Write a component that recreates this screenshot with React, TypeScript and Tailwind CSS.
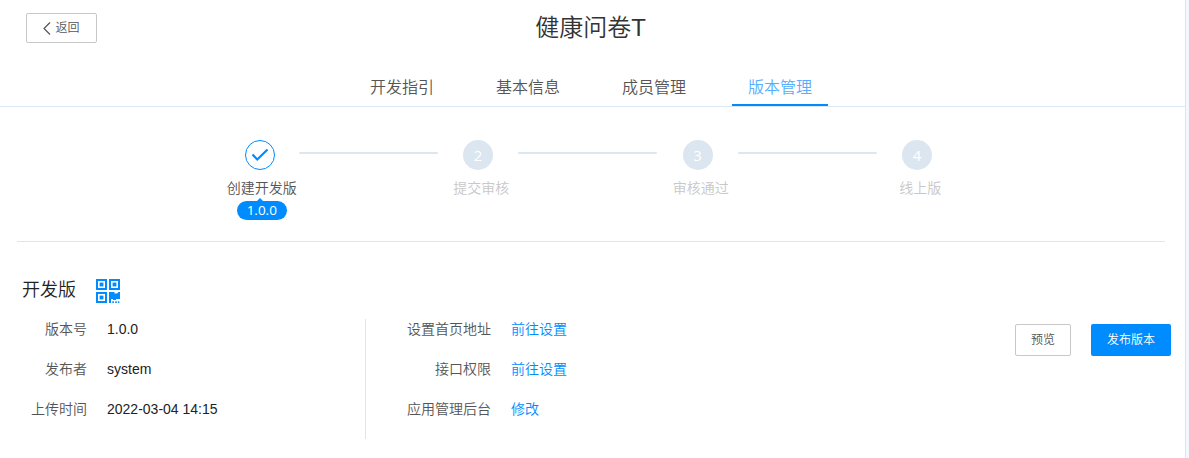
import clsx from "clsx";

const tabs = ["开发指引", "基本信息", "成员管理", "版本管理"];
const activeTab = "版本管理";

interface Step {
  label: string;
  done?: boolean;
  version?: string;
}

const steps: Step[] = [
  { label: "创建开发版", done: true, version: "1.0.0" },
  { label: "提交审核" },
  { label: "审核通过" },
  { label: "线上版" },
];

const info = [
  { label: "版本号", value: "1.0.0" },
  { label: "发布者", value: "system" },
  { label: "上传时间", value: "2022-03-04 14:15" },
];

const settings = [
  { label: "设置首页地址", action: "前往设置" },
  { label: "接口权限", action: "前往设置" },
  { label: "应用管理后台", action: "修改" },
];

function QrIcon() {
  return (
    <svg width="24" height="24" viewBox="0 0 24 24" fill="#008cff">
      {/* Three finder squares */}
      {[[0, 0], [13, 0], [0, 13]].map(([x, y]) => (
        <g key={`${x}-${y}`}>
          <rect x={x} y={y} width="11" height="11" />
          <rect x={x + 2} y={y + 2} width="7" height="7" fill="#fff" />
          <rect x={x + 3.6} y={y + 3.6} width="3.8" height="3.8" />
        </g>
      ))}
      <path d="M13 13h5.5v1.5h2.5l1.5-1.5h1.5v7h-4v1h-3v-1h-2v4h-2z" />
      <path d="M16.3 22.2h1.6v1.8h-1.6zM19.2 22.2h1.6v1.8h-1.6zM21.9 22.2h1.4v1.8h-1.4z" />
    </svg>
  );
}

function StepItem({ step, index }: { step: Step; index: number }) {
  return (
    <div className="w-[80px] pl-[6px] shrink-0 flex flex-col items-center">
      <div
        className={clsx(
          "w-[30px] h-[30px] rounded-full flex items-center justify-center text-[15px] leading-none font-['Open_Sans',sans-serif] font-normal",
          step.done ? "mr-[4.5px] border border-[#008cff]" : "mr-[6.5px] bg-[#dbe6f0] text-white"
        )}
      >
        {step.done ? (
          <svg width="18" height="14" viewBox="0 0 18 14" fill="none" stroke="#008cff" strokeWidth="2.2">
            <path d="M1.5 6.5L6.3 11.5L16.5 1.5" />
          </svg>
        ) : (
          <span>{index + 1}</span>
        )}
      </div>
      <span
        className={clsx(
          "mt-2 text-sm leading-5 whitespace-nowrap",
          step.done ? "text-[#555]" : "text-[#c8c8c8]"
        )}
      >
        {step.label}
      </span>
      {step.version && (
        <div className="relative mt-[3px] w-[50px] h-[19px] rounded-full bg-[#008cff] text-white text-[13.5px] leading-[19px] text-center font-['Open_Sans',sans-serif] font-normal">
          <span className="absolute -top-[3px] left-[20px] border-x-[3px] border-b-[3px] border-x-transparent border-b-[#008cff]" />
          {step.version}
        </div>
      )}
    </div>
  );
}

export default function App() {
  return (
    <div className="w-[1189px] h-[458px] overflow-hidden flex bg-[#f3f8fe] text-sm leading-5 text-[#222] font-['Liberation_Sans','Noto_Sans_CJK_SC',sans-serif] font-[350]">
      <div className="w-[1186px] shrink-0 bg-white border-r border-[#dbe6f3]">
        <header className="h-[107px] border-b border-[#dbe6f3] flex flex-col justify-between">
          <div className="grid grid-cols-[1fr_auto_1fr] items-start pl-[26px] pr-[30px] pt-[13px]">
            <button className="w-[71px] h-[30px] flex items-center justify-center gap-1 rounded-[2px] border border-[#c8c8c8] text-xs text-[#555]">
              <svg width="8" height="13" viewBox="0 0 8 13" fill="none" stroke="#555" strokeWidth="1.2">
                <path d="M7 0.5L1 6.5L7 12.5" />
              </svg>
              返回
            </button>
            <h1 className="text-2xl leading-[30px] text-[#333]">健康问卷T</h1>
          </div>
          <nav className="flex justify-center gap-[30px] pr-[3px]">
            {tabs.map((tab) => (
              <a
                key={tab}
                className={clsx(
                  "w-24 h-[30px] text-base leading-6 text-center border-b-2",
                  tab === activeTab ? "text-[#55adff] border-[#008cff]" : "text-[#555] border-transparent"
                )}
              >
                {tab}
              </a>
            ))}
          </nav>
        </header>

        <section className="ml-[17px] mr-5 h-[135px] pt-[33px] border-b border-[#dbe6f0]">
          <div className="flex justify-center pr-[6px]">
            {steps.map((step, i) => (
              <div key={step.label} className="flex items-start">
                {i > 0 && <div className="w-[139px] mr-[0.5px] h-[2px] mt-3 bg-[#dbe6f0] rounded-full" />}
                <StepItem step={step} index={i} />
              </div>
            ))}
          </div>
        </section>

        <section className="pl-[22px] pr-[14px] pt-[35px]">
          <div className="flex items-center gap-5 h-[28px]">
            <h2 className="text-lg leading-6 mb-[2px]">开发版</h2>
            <QrIcon />
          </div>
          <div className="flex mt-[14px]">
            <div className="w-[344px] h-[120px] border-r border-[#dbe6f0] flex flex-col gap-5">
              {info.map((row) => (
                <div key={row.label} className="flex gap-5">
                  <span className="w-[65px] text-right text-[#555]">{row.label}</span>
                  <span>{row.value}</span>
                </div>
              ))}
            </div>
            <div className="flex flex-col gap-5">
              {settings.map((row) => (
                <div key={row.label} className="flex gap-5">
                  <span className="w-[125px] text-right text-[#555]">{row.label}</span>
                  <a className="text-[#008cff]">{row.action}</a>
                </div>
              ))}
            </div>
            <div className="ml-auto mt-[5px] flex gap-5 text-xs">
              <button className="w-14 h-8 rounded-[2px] border border-[#c8c8c8] text-[#555]">预览</button>
              <button className="w-20 h-8 rounded-[2px] bg-[#008cff] text-white">发布版本</button>
            </div>
          </div>
        </section>
      </div>
    </div>
  );
}
